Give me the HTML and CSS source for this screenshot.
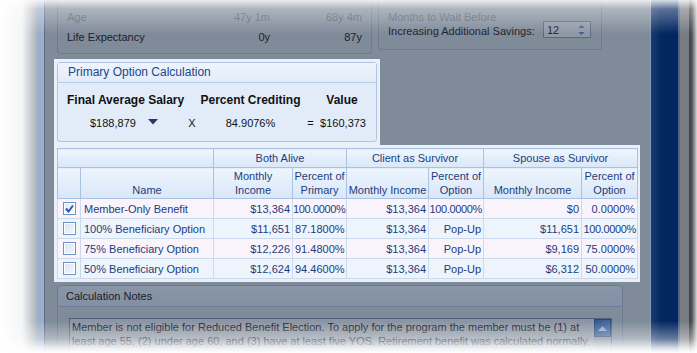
FILE: index.html
```html
<!DOCTYPE html>
<html lang="en">
<head>
  <meta charset="UTF-8">
  <title>Option Calculation</title>
  <link rel="stylesheet" href="styles.css">
</head>
<body>
  <div class="screen">
    <div class="side-left"></div>
    <div class="frame-bar"></div>

    <main class="main">
      <div class="top-row">
        <section class="box ages">
          <div class="age-row muted"><span>Age</span><span class="v">47y 1m</span><span class="v">68y 4m</span></div>
          <div class="age-row"><span>Life Expectancy</span><span class="v">0y</span><span class="v">87y</span></div>
        </section>
        <section class="box wait">
          <div class="wait-text">
            <div class="muted">Months to Wait Before</div>
            <div>Increasing Additional Savings:</div>
          </div>
          <div class="spinner">
            <span>12</span>
            <svg width="7" height="12" viewBox="0 0 7 12">
              <path d="M3.5 1 L6.5 4 L0.5 4 Z" fill="#3d5f93"/>
              <path d="M0.5 8 L6.5 8 L3.5 11 Z" fill="#3d5f93"/>
            </svg>
          </div>
        </section>
      </div>

      <div class="spotlight">
        <div class="spot spot-primary">
          <section class="primary">
            <div class="primary-head">Primary Option Calculation</div>
            <div class="primary-body">
              <div class="pa head">Final Average Salary</div>
              <div></div>
              <div class="pc head">Percent Crediting</div>
              <div></div>
              <div class="pe head">Value</div>

              <div class="pa val">$188,879 <svg class="caret" width="10" height="6" viewBox="0 0 10 6"><path d="M0 0 H10 L5 5.5 Z" fill="#1f3b6b"/></svg></div>
              <div class="pb">X</div>
              <div class="pc">84.9076%</div>
              <div class="pb">=</div>
              <div class="pe">$160,373</div>
            </div>
          </section>
        </div>

        <div class="spot spot-table">
          <table class="options">
            <colgroup>
              <col class="c-check"><col class="c-name">
              <col class="c-inc"><col class="c-pct">
              <col class="c-inc2"><col class="c-pct2">
              <col class="c-inc3"><col class="c-pct3">
            </colgroup>
            <thead>
              <tr class="group">
                <th colspan="2"></th>
                <th colspan="2">Both Alive</th>
                <th colspan="2">Client as Survivor</th>
                <th colspan="2">Spouse as Survivor</th>
              </tr>
              <tr class="cols">
                <th></th>
                <th>Name</th>
                <th>Monthly<br>Income</th>
                <th>Percent of<br>Primary</th>
                <th>Monthly Income</th>
                <th>Percent of<br>Option</th>
                <th>Monthly Income</th>
                <th>Percent of<br>Option</th>
              </tr>
            </thead>
            <tbody>
              <tr>
                <td class="chk"><span class="box-chk checked"><svg width="9" height="9" viewBox="0 0 9 9"><path d="M1 4.5 L3.5 7.5 L8 1.5" fill="none" stroke="#2a5aa6" stroke-width="2"/></svg></span></td>
                <td class="name">Member-Only Benefit</td>
                <td>$13,364</td><td class="tight">100.0000%</td>
                <td>$13,364</td><td class="tight">100.0000%</td>
                <td>$0</td><td>0.0000%</td>
              </tr>
              <tr>
                <td class="chk"><span class="box-chk"></span></td>
                <td class="name">100% Beneficiary Option</td>
                <td>$11,651</td><td>87.1800%</td>
                <td>$13,364</td><td>Pop-Up</td>
                <td>$11,651</td><td class="tight">100.0000%</td>
              </tr>
              <tr>
                <td class="chk"><span class="box-chk"></span></td>
                <td class="name">75% Beneficiary Option</td>
                <td>$12,226</td><td>91.4800%</td>
                <td>$13,364</td><td>Pop-Up</td>
                <td>$9,169</td><td>75.0000%</td>
              </tr>
              <tr>
                <td class="chk"><span class="box-chk"></span></td>
                <td class="name">50% Beneficiary Option</td>
                <td>$12,624</td><td>94.4600%</td>
                <td>$13,364</td><td>Pop-Up</td>
                <td>$6,312</td><td>50.0000%</td>
              </tr>
            </tbody>
          </table>
        </div>
      </div>

      <section class="notes">
        <div class="notes-head">Calculation Notes</div>
        <div class="notes-body">
          <div class="notes-text">
            <p>Member is not eligible for Reduced Benefit Election. To apply for the program the member must be (1) at<br>least age 55, (2) under age 60, and (3) have at least five YOS. Retirement benefit was calculated normally.</p>
            <div class="scroll">
              <div class="scroll-btn">
                <svg width="9" height="5" viewBox="0 0 9 5"><path d="M0 5 L4.5 0 L9 5 Z" fill="#8fa9d2"/></svg>
              </div>
            </div>
          </div>
        </div>
      </section>
    </main>

    <div class="nav-bar"></div>
    <div class="edge-gray"></div>
    <div class="edge-dark"></div>
  </div>
  <div class="vignette"></div>
</body>
</html>
```

FILE: styles.css
```css
* {
  box-sizing: border-box;
}

body {
  margin: 0;
  width: 697px;
  height: 353px;
  overflow: hidden;
  position: relative;
  background: #808b9a;
  font-family: "Liberation Sans", Arial, sans-serif;
  font-size: 11px;
  color: #1a202b;
}

.screen {
  display: flex;
  height: 353px;
}

.side-left {
  width: 37px;
  background: #8a939f;
}

.frame-bar {
  width: 8px;
  background: linear-gradient(to right, #7892b8, #90a5c4 65%, #a3b2c7);
  border-right: 1px solid #5a6880;
}

.main {
  width: 605px;
  padding-left: 12px;
}

/* top panels (dimmed) */
.top-row {
  display: flex;
  align-items: flex-start;
  gap: 6px;
}

.box {
  border: 1px solid #6b7a90;
  border-top: none;
  border-radius: 0 0 4px 4px;
}

.ages {
  width: 315px;
  padding: 7px 9px 6px 9px;
}

.age-row {
  display: grid;
  grid-template-columns: 1fr 70px 92px;
  height: 20px;
  line-height: 20px;
}

.age-row .v {
  text-align: right;
}

.muted {
  color: #58616e;
}

.wait {
  width: 224px;
  height: 50px;
  display: flex;
  align-items: flex-start;
  padding: 10px 10px 0 9px;
}

.wait-text {
  line-height: 14px;
}

.spinner {
  margin-left: auto;
  margin-top: 11px;
  width: 48px;
  height: 17px;
  border: 1px solid #56688a;
  background: #8e97a4;
  display: flex;
  align-items: center;
  justify-content: space-between;
  padding: 0 5px 0 3px;
}

/* highlighted area */
.spotlight {
  margin-top: 5px;
  margin-left: -3px;
  display: flex;
  flex-direction: column;
  align-items: flex-start;
}

.spot {
  background: #eaf0f8;
  padding: 3px;
}

.spot-primary {
  width: 326px;
}

.primary {
  border: 1px solid #aec4e4;
  border-radius: 3px;
  background: #e2ecf9;
  color: #111;
}

.primary-head {
  height: 20px;
  line-height: 19px;
  padding-left: 10px;
  font-size: 12px;
  color: #22468a;
  background: linear-gradient(#eef4fd, #e2ecf9);
  border-bottom: 1px solid #b6cbe8;
}

.primary-body {
  display: grid;
  grid-template-columns: 119px 12px 105px 15px 48px;
  grid-template-rows: 16px 16px;
  row-gap: 7px;
  padding: 9px 0 10px 9px;
  line-height: 16px;
}

.primary-body .head {
  font-weight: bold;
  font-size: 12px;
  white-space: nowrap;
}

.primary-body .pc,
.primary-body .pb {
  text-align: center;
}

.primary-body .pe {
  text-align: right;
}

.primary-body .pe.head {
  text-align: center;
}

.primary-body .pa.val {
  padding-left: 23px;
  display: flex;
  align-items: center;
}

.caret {
  margin-left: 12px;
  margin-top: -2px;
}

.spot-table {
  width: 586px;
}

/* options table */
.options {
  width: 580px;
  table-layout: fixed;
  border-collapse: collapse;
  border: 1px solid #a3bde1;
  color: #1c3d7c;
}

.c-check { width: 23px; }
.c-name { width: 133px; }
.c-inc { width: 79px; }
.c-pct { width: 54px; }
.c-inc2 { width: 82px; }
.c-pct2 { width: 55px; }
.c-inc3 { width: 98px; }
.c-pct3 { width: 56px; }

.options th {
  font-weight: normal;
  background: linear-gradient(#eef5fe, #d9e7f8);
  border: 1px solid #a9c2e4;
  padding: 0;
  text-align: center;
  white-space: nowrap;
  overflow: hidden;
}

.options tr.group th {
  height: 19px;
  line-height: 17px;
}

.options tr.cols th {
  height: 31px;
  line-height: 14px;
  vertical-align: bottom;
  padding-bottom: 1px;
}

.options td {
  height: 20px;
  padding: 0 2px;
  border: 1px solid #cbdaee;
  text-align: right;
  white-space: nowrap;
  overflow: hidden;
}

.options td.tight {
  padding: 0 1px 0 0;
  letter-spacing: -0.35px;
}

.options tbody tr:nth-child(odd) td {
  background: #f9f3fb;
}

.options tbody tr:nth-child(even) td {
  background: #eef4fc;
}

.options td.name {
  text-align: left;
  padding-left: 3px;
}

.options td.chk {
  text-align: center;
  padding: 0;
}

.box-chk {
  display: inline-flex;
  align-items: center;
  justify-content: center;
  width: 13px;
  height: 13px;
  border: 1px solid #6d93cb;
  box-shadow: inset 0 0 0 1px #fff;
  background: linear-gradient(135deg, #d6e2f2, #f4f8fd);
  vertical-align: middle;
}

.box-chk.checked {
  background: linear-gradient(135deg, #dfe9f7, #fbfdff);
}

/* calculation notes (dimmed) */
.notes {
  width: 566px;
  margin-top: 3px;
  border: 1px solid #6a7b94;
  border-bottom: none;
  border-radius: 4px 4px 0 0;
  height: 68px;
  overflow: hidden;
}

.notes-head {
  height: 21px;
  line-height: 21px;
  padding-left: 8px;
  background: linear-gradient(#8995a8, #8390a3);
  border-bottom: 1px solid #6c7e99;
  border-radius: 4px 4px 0 0;
}

.notes-body {
  padding: 11px 10px 0 11px;
}

.notes-text {
  display: flex;
  border: 1px solid #4f607a;
  border-bottom: none;
  background: #8a94a2;
  height: 35px;
}

.notes-text p {
  margin: 0;
  flex: 1;
  padding: 1px 2px;
  line-height: 14px;
  white-space: nowrap;
  overflow: hidden;
}

.scroll {
  width: 17px;
  background: #7d8899;
}

.scroll-btn {
  height: 18px;
  background: linear-gradient(to right, #34598f, #44689c);
  border: 1px solid #29467a;
  display: flex;
  align-items: center;
  justify-content: center;
}

/* right window chrome */
.nav-bar {
  width: 30px;
  background: linear-gradient(to right, #8597b2 0, #8597b2 1px, #1b3a6c 1px, #03285f 40%, #002561 100%);
  border-right: 2px solid #4c6589;
}

.edge-gray {
  width: 9px;
  background: #777c84;
}

.edge-dark {
  width: 8px;
  background: linear-gradient(to right, #4b4d50, #242527 40%, #2d2e30);
}

/* soft white fade around the capture */
.vignette {
  position: absolute;
  inset: 0;
  pointer-events: none;
  background:
    linear-gradient(to right, #fff 0, rgba(255,255,255,.9) 22px, rgba(255,255,255,0) 44px),
    linear-gradient(to bottom, rgba(255,255,255,.85) 0, rgba(255,255,255,.35) 9px, rgba(255,255,255,.2) 20px, rgba(255,255,255,0) 34px),
    linear-gradient(to top, #fff 0, rgba(255,255,255,.85) 5px, rgba(255,255,255,.4) 14px, rgba(255,255,255,0) 32px),
    linear-gradient(to left, rgba(255,255,255,.8) 0, rgba(255,255,255,0) 7px);
}
```
